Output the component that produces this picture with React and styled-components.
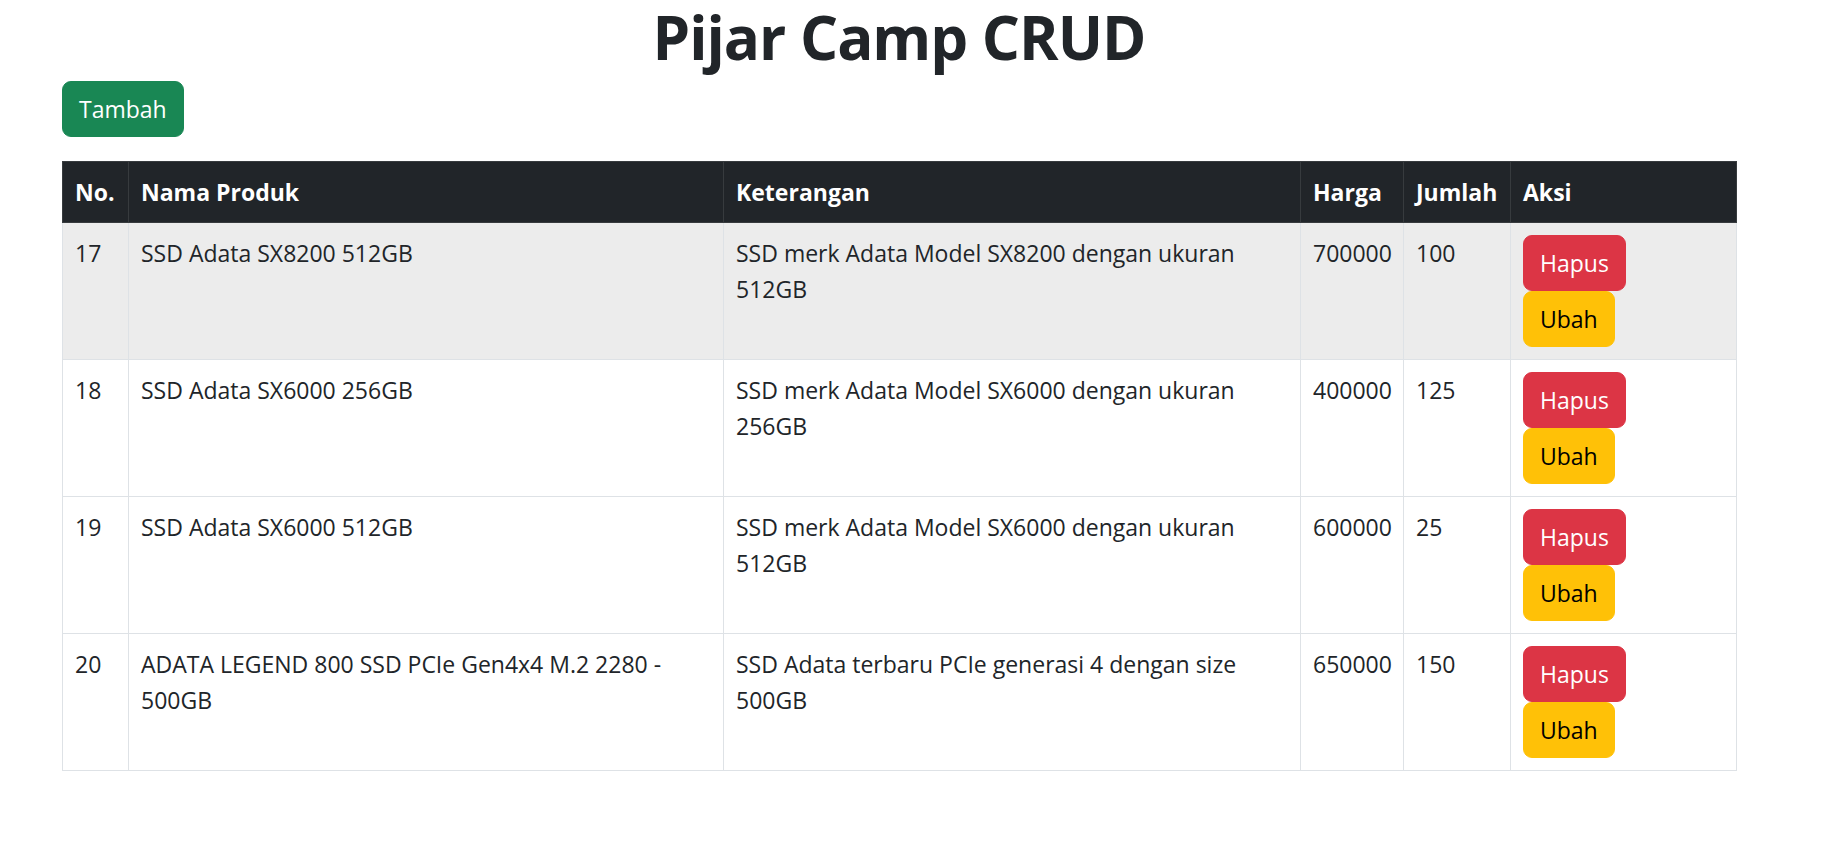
import React from "react";
import styled, { createGlobalStyle } from "styled-components";

const products = [
  { id: 17, nama: "SSD Adata SX8200 512GB", ket: "SSD merk Adata Model SX8200 dengan ukuran 512GB", harga: 700000, jumlah: 100 },
  { id: 18, nama: "SSD Adata SX6000 256GB", ket: "SSD merk Adata Model SX6000 dengan ukuran 256GB", harga: 400000, jumlah: 125 },
  { id: 19, nama: "SSD Adata SX6000 512GB", ket: "SSD merk Adata Model SX6000 dengan ukuran 512GB", harga: 600000, jumlah: 25 },
  { id: 20, nama: "ADATA LEGEND 800 SSD PCIe Gen4x4 M.2 2280 - 500GB", ket: "SSD Adata terbaru PCIe generasi 4 dengan size 500GB", harga: 650000, jumlah: 150 },
];

const columns = [
  { label: "No.", width: 66 },
  { label: "Nama Produk", width: 595 },
  { label: "Keterangan", width: 577 },
  { label: "Harga", width: 103 },
  { label: "Jumlah", width: 107 },
  { label: "Aksi", width: 226 },
];

const App = () => {
  return (
    <>
      <GlobalStyle />
      <Container>
        <Title>Pijar Camp CRUD</Title>
        <Button variant="success">Tambah</Button>
        <Table>
          <colgroup>
            {columns.map((c) => (
              <Col key={c.label} w={c.width} />
            ))}
          </colgroup>
          <thead>
            <tr>
              {columns.map((c) => (
                <Th key={c.label}>{c.label}</Th>
              ))}
            </tr>
          </thead>
          <tbody>
            {products.map((p, i) => (
              <Row key={p.id} hovered={i === 0}>
                <Td>{p.id}</Td>
                <Td>{p.nama}</Td>
                <Td>{p.ket}</Td>
                <Td>{p.harga}</Td>
                <Td>{p.jumlah}</Td>
                <Td>
                  <Actions>
                    <Button variant="danger">Hapus</Button>
                    <Button variant="warning">Ubah</Button>
                  </Actions>
                </Td>
              </Row>
            ))}
          </tbody>
        </Table>
      </Container>
    </>
  );
};

export default App;

const GlobalStyle = createGlobalStyle`
  body {
    margin: 0;
    background: #fff;
    color: #212529;
    font-family: "Segoe UI", "Open Sans", sans-serif;
    font-size: 23px;
    line-height: 36px;
  }
`;

const Container = styled.div`
  width: 1674px;
  margin-left: 62px;
  padding-top: 1px;
  display: flex;
  flex-direction: column;
  align-items: flex-start;
`;

const Title = styled.h1`
  align-self: stretch;
  margin: 0 0 8px;
  text-align: center;
  font-size: 60px;
  line-height: 72px;
  letter-spacing: -1px;
  font-weight: 700;
  color: #212529;
`;

const colors = {
  success: { bg: "#198754", fg: "#fff" },
  danger: { bg: "#dc3545", fg: "#fff" },
  warning: { bg: "#ffc107", fg: "#000" },
};

const Button = styled.button`
  font-family: inherit;
  font-size: 23px;
  line-height: 36px;
  padding: 9px 16px;
  border: 1px solid ${(p) => colors[p.variant].bg};
  border-radius: 9px;
  background: ${(p) => colors[p.variant].bg};
  color: ${(p) => colors[p.variant].fg};
  cursor: pointer;
`;

const Table = styled.table`
  margin-top: 24px;
  width: 1674px;
  table-layout: fixed;
  border-collapse: collapse;
  border: 1px solid #dee2e6;
`;

const Col = styled.col`
  width: ${(p) => p.w}px;
`;

const Th = styled.th`
  background: #212529;
  color: #fff;
  text-align: left;
  font-weight: 700;
  padding: 12px;
  border: 1px solid #373b3e;
  vertical-align: bottom;
`;

const Row = styled.tr`
  background: ${(p) => (p.hovered ? "#ececec" : "#fff")};
`;

const Td = styled.td`
  padding: 12px;
  border: 1px solid #dee2e6;
  vertical-align: top;
`;

const Actions = styled.div`
  display: flex;
  flex-direction: column;
  align-items: flex-start;
`;
